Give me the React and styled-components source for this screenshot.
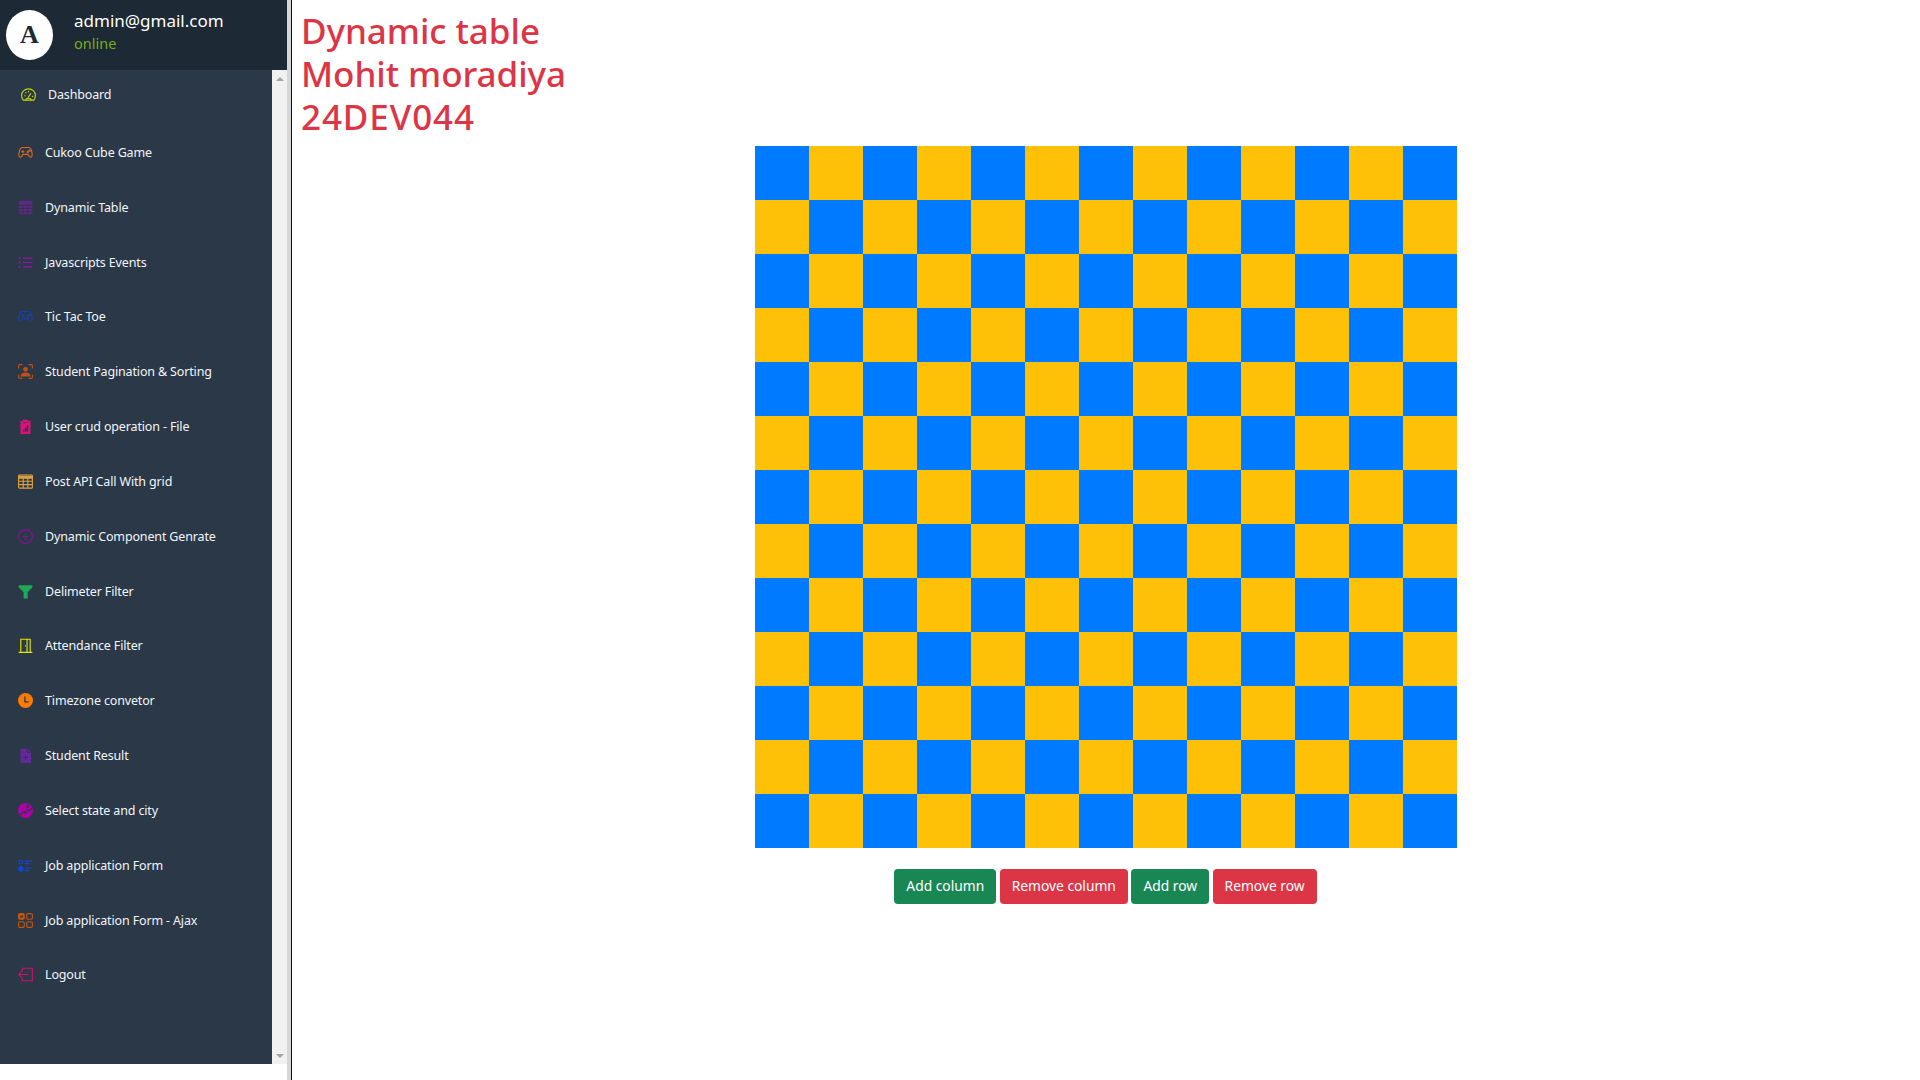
import React from 'react'
import styled, { createGlobalStyle } from 'styled-components'

const GlobalStyle = createGlobalStyle`
  html, body {
    margin: 0;
    padding: 0;
    height: 100%;
    background: #fff;
    font-family: "Noto Sans", "Open Sans", sans-serif;
  }
`

const Svg = ({ color, children, filled }) => (
  <IconSvg viewBox="0 0 24 24" $color={color} $filled={filled}>{children}</IconSvg>
)

const icons = {
  gauge: (c) => (
    <Svg color={c}>
      <path d="M3.500 21C1.500 18.500 1 16 1 13.500 1 7 6 3 12 3s11 4 11 10.500c0 2.500-.5 5-2.500 7.500z" />
      <path d="M11 17l5-7M5 14h2M17.500 15h2M12 6.500v2M7 8.500l1.500 1.500" />
      <path d="M8 21v-1c0-1 1-2 4-2s4 1 4 2v1" />
    </Svg>
  ),
  gamepad: (c) => (
    <Svg color={c}>
      <path d="M7 4h10c3 0 4 2 5 6.500.8 3.800 1 8-1 9-2 .8-3.500-1.500-5-4.500H8c-1.500 3-3 5.300-5 4.500-2-1-1.800-5.200-1-9C3 6 4 4 7 4z" />
      <path d="M5.500 10.500h4.500M7.800 8.300v4.500" />
      <circle cx="15.500" cy="11" r="1" />
      <circle cx="18.500" cy="9" r="1" />
    </Svg>
  ),
  table: (c) => (
    <Svg color={c} filled>
      <rect x="1" y="1" width="22" height="22" rx="3" />
      <path d="M1 8.500h22M1 13.500h22M1 18.500h22M8.300 8.500V23M15.700 8.500V23" fill="none" stroke="#2a3848" strokeWidth="1.300" />
    </Svg>
  ),
  list: (c) => (
    <Svg color={c}>
      <path d="M8 5h15M8 12h15M8 19h15" />
      <path d="M1 5h3M1 12h3M1 19h3" strokeWidth="3" />
    </Svg>
  ),
  focus: (c) => (
    <Svg color={c}>
      <path d="M1 7V3c0-1 1-2 2-2h4M17 1h4c1 0 2 1 2 2v4M1 17v4c0 1 1 2 2 2h4M17 23h4c1 0 2-1 2-2v-4" />
      <circle cx="12" cy="8.500" r="3.800" fill="currentColor" stroke="none" />
      <path d="M4 20c0-4 3-6.500 8-6.500s8 2.500 8 6.500z" fill="currentColor" stroke="none" />
    </Svg>
  ),
  clipboard: (c) => (
    <Svg color={c} filled>
      <path d="M4 3h4V1h8v2h4v22H4z" />
      <path d="M8 20h2.500v-3H8zM11 20h2.500v-6H11zM14 20h2.500V10H14z" fill="#2a3848" />
      <path d="M8 5h8v1H8z" fill="#2a3848" />
    </Svg>
  ),
  grid: (c) => (
    <Svg color={c}>
      <rect x="1" y="1.500" width="22" height="21" rx="1.500" />
      <path d="M1 3.500h22v3H1z" fill="currentColor" />
      <path d="M1 11.500h22M1 17h22M8.300 6.500v16M15.700 6.500v16" />
    </Svg>
  ),
  plus: (c) => (
    <Svg color={c}>
      <circle cx="12" cy="12" r="11" />
      <path d="M12 7v10M7 12h10" />
    </Svg>
  ),
  funnel: (c) => (
    <Svg color={c} filled>
      <path d="M1 2h22v3l-7.500 8v10H9V13L1 5z" />
    </Svg>
  ),
  door: (c) => (
    <Svg color={c}>
      <path d="M1 23h22M4.500 23V2h15v21M14.500 2v21" />
      <path d="M11 12.500h1.500" strokeWidth="2" />
    </Svg>
  ),
  clock: (c) => (
    <Svg color={c} filled>
      <circle cx="12" cy="12" r="12" />
      <path d="M11 5.500v8.500h6" fill="none" stroke="#2a3848" strokeWidth="2" />
    </Svg>
  ),
  file: (c) => (
    <Svg color={c} filled>
      <path d="M6 1h9l6 6v15c0 1-1 2-2 2H6c-1 0-2-1-2-2V3c0-1 1-2 2-2z" />
      <path d="M12 11v8M8 15h8M15 2v5h5" fill="none" stroke="#2a3848" strokeWidth="1.500" />
    </Svg>
  ),
  globe: (c) => (
    <Svg color={c} filled>
      <circle cx="12" cy="12" r="12" />
      <path d="M3 19l7-5 2 3 4-6 3 1 4-4M13 2l4 3-4 3" fill="none" stroke="#2a3848" strokeWidth="2" />
    </Svg>
  ),
  bullets: (c) => (
    <Svg color={c}>
      <circle cx="4.500" cy="6.500" r="3" />
      <circle cx="4.500" cy="17.500" r="3.500" fill="currentColor" />
      <path d="M11 5h11M11 9h7M11 16h11M11 20h7" />
    </Svg>
  ),
  squares: (c) => (
    <Svg color={c}>
      <rect x="1" y="1" width="9" height="9" rx="2" fill="currentColor" />
      <rect x="14" y="1" width="9" height="9" rx="2" />
      <rect x="1" y="14" width="9" height="9" rx="2" />
      <rect x="14" y="14" width="9" height="9" rx="2" />
      <path d="M3.500 5.500l1.500 1.500 3-3" stroke="#2a3848" />
    </Svg>
  ),
  logout: (c) => (
    <Svg color={c}>
      <path d="M7 7V2h16v20H7v-5" />
      <path d="M17 12H1M6 7l-5 5 5 5" />
    </Svg>
  ),
}

const navItems = [
  { label: 'Dashboard', icon: 'gauge', color: '#c4d80e', first: true },
  { label: 'Cukoo Cube Game', icon: 'gamepad', color: '#e0651a' },
  { label: 'Dynamic Table', icon: 'table', color: '#5c2a80' },
  { label: 'Javascripts Events', icon: 'list', color: '#9a0fab' },
  { label: 'Tic Tac Toe', icon: 'gamepad', color: '#1440b8' },
  { label: 'Student Pagination & Sorting', icon: 'focus', color: '#c4500f' },
  { label: 'User crud operation - File', icon: 'clipboard', color: '#e0107a' },
  { label: 'Post API Call With grid', icon: 'grid', color: '#e2a13c' },
  { label: 'Dynamic Component Genrate', icon: 'plus', color: '#8a109a' },
  { label: 'Delimeter Filter', icon: 'funnel', color: '#1fa855' },
  { label: 'Attendance Filter', icon: 'door', color: '#e6e600' },
  { label: 'Timezone convetor', icon: 'clock', color: '#ff7a00' },
  { label: 'Student Result', icon: 'file', color: '#64289a' },
  { label: 'Select state and city', icon: 'globe', color: '#b000a8' },
  { label: 'Job application Form', icon: 'bullets', color: '#0f48d8' },
  { label: 'Job application Form - Ajax', icon: 'squares', color: '#c4560f' },
  { label: 'Logout', icon: 'logout', color: '#c8146c' },
]

const ROWS = 13
const COLS = 13

const App = () => {
  const cells = []
  for (let r = 0; r < ROWS; r++) {
    for (let c = 0; c < COLS; c++) {
      cells.push(<Cell key={`${r}-${c}`} $odd={(r + c) % 2 === 1} />)
    }
  }

  return (
    <Container>
      <GlobalStyle />
      <Sidebar>
        <Profile>
          <Avatar>A</Avatar>
          <ProfileText>
            <Email>admin@gmail.com</Email>
            <Status>online</Status>
          </ProfileText>
        </Profile>
        <SideBody>
          <NavList>
            {navItems.map((item) => (
              <NavItem key={item.label} $first={item.first}>
                {icons[item.icon](item.color)}
                <NavLabel>{item.label}</NavLabel>
              </NavItem>
            ))}
          </NavList>
          <ScrollTrack>
            <ArrowUp />
            <ArrowDown />
          </ScrollTrack>
        </SideBody>
      </Sidebar>
      <Main>
        <Title>
          Dynamic table<br />Mohit moradiya<br /><TitleCode>24DEV044</TitleCode>
        </Title>
        <Board>{cells}</Board>
        <Actions>
          <ActionButton $danger={false}>Add column</ActionButton>
          <ActionButton $danger>Remove column</ActionButton>
          <ActionButton $danger={false}>Add row</ActionButton>
          <ActionButton $danger>Remove row</ActionButton>
        </Actions>
      </Main>
    </Container>
  )
}

export default App

const Container = styled.div`
  display: flex;
  width: 100%;
  height: 100vh;
  overflow: hidden;
`
const Sidebar = styled.aside`
  width: 287px;
  flex-shrink: 0;
  height: 100%;
  box-sizing: content-box;
  border-right: 4px solid #d6d6d6;
  box-shadow: 1px 0 0 #111;
  display: flex;
  flex-direction: column;
`
const Profile = styled.div`
  height: 70px;
  flex-shrink: 0;
  background-color: #1d2935;
  display: flex;
  align-items: center;
  padding-left: 6px;
`
const Avatar = styled.div`
  width: 47px;
  height: 50px;
  border-radius: 50%;
  background-color: #fff;
  color: #1d2935;
  display: flex;
  justify-content: center;
  align-items: center;
  font-family: "Liberation Serif", serif;
  font-weight: bold;
  font-size: 26px;
`
const ProfileText = styled.div`
  margin-left: 21px;
  display: flex;
  flex-direction: column;
`
const Email = styled.div`
  color: #fff;
  font-size: 17px;
  line-height: 22px;
  margin-top: -7px;
`
const Status = styled.div`
  color: #75ad1e;
  font-size: 14.500px;
  line-height: 20px;
  margin-top: 1px;
`
const SideBody = styled.div`
  display: flex;
  height: 994px;
  flex-shrink: 0;
`
const NavList = styled.nav`
  flex: 1;
  min-width: 0;
  background-color: #2a3848;
`
const ScrollTrack = styled.div`
  width: 15px;
  flex-shrink: 0;
  box-sizing: border-box;
  padding: 7px 0 6px;
  background-color: #f1f1f1;
  display: flex;
  flex-direction: column;
  justify-content: space-between;
  align-items: center;
`
const ArrowUp = styled.div`
  width: 0;
  height: 0;
  border-left: 4px solid transparent;
  border-right: 4px solid transparent;
  border-bottom: 4px solid #a3a3a3;
`
const ArrowDown = styled.div`
  width: 0;
  height: 0;
  border-left: 4px solid transparent;
  border-right: 4px solid transparent;
  border-top: 4px solid #a3a3a3;
`
const NavItem = styled.div`
  display: flex;
  align-items: center;
  height: ${(p) => (p.$first ? '48px' : '54.85px')};
  margin-bottom: ${(p) => (p.$first ? '6.9px' : '0')};
  padding-left: ${(p) => (p.$first ? '21px' : '18px')};
  gap: 12px;
  color: #f2f5f8;
`
const IconSvg = styled.svg`
  width: 15px;
  height: 15px;
  flex-shrink: 0;
  color: ${(p) => p.$color};
  fill: ${(p) => (p.$filled ? p.$color : 'none')};
  stroke: ${(p) => (p.$filled ? 'none' : p.$color)};
  stroke-width: 1.8;
`
const NavLabel = styled.span`
  font-size: 12.500px;
  letter-spacing: -0.15px;
  white-space: nowrap;
`
const Main = styled.main`
  flex: 1;
  min-width: 0;
  padding: 9px 10px 0;
  display: flex;
  flex-direction: column;
`
const Title = styled.h2`
  margin: 0;
  color: #dc3545;
  font-size: 35px;
  letter-spacing: -0.05px;
  line-height: 43.200px;
  font-weight: 500;
`
const TitleCode = styled.span`
  letter-spacing: 0.9px;
`
const Board = styled.div`
  display: grid;
  grid-template-columns: repeat(${COLS}, 54px);
  grid-auto-rows: 54px;
  align-self: center;
  margin-top: 7.400px;
`
const Cell = styled.div`
  background-color: ${(p) => (p.$odd ? '#ffc107' : '#007bff')};
`
const Actions = styled.div`
  display: flex;
  justify-content: center;
  gap: 3.500px;
  margin-top: 21px;
`
const ActionButton = styled.button`
  height: 35px;
  padding: 0 12px 2px;
  border: none;
  border-radius: 4px;
  color: #fff;
  font-family: inherit;
  font-size: 13.800px;
  background-color: ${(p) => (p.$danger ? '#dc3545' : '#198754')};
`
